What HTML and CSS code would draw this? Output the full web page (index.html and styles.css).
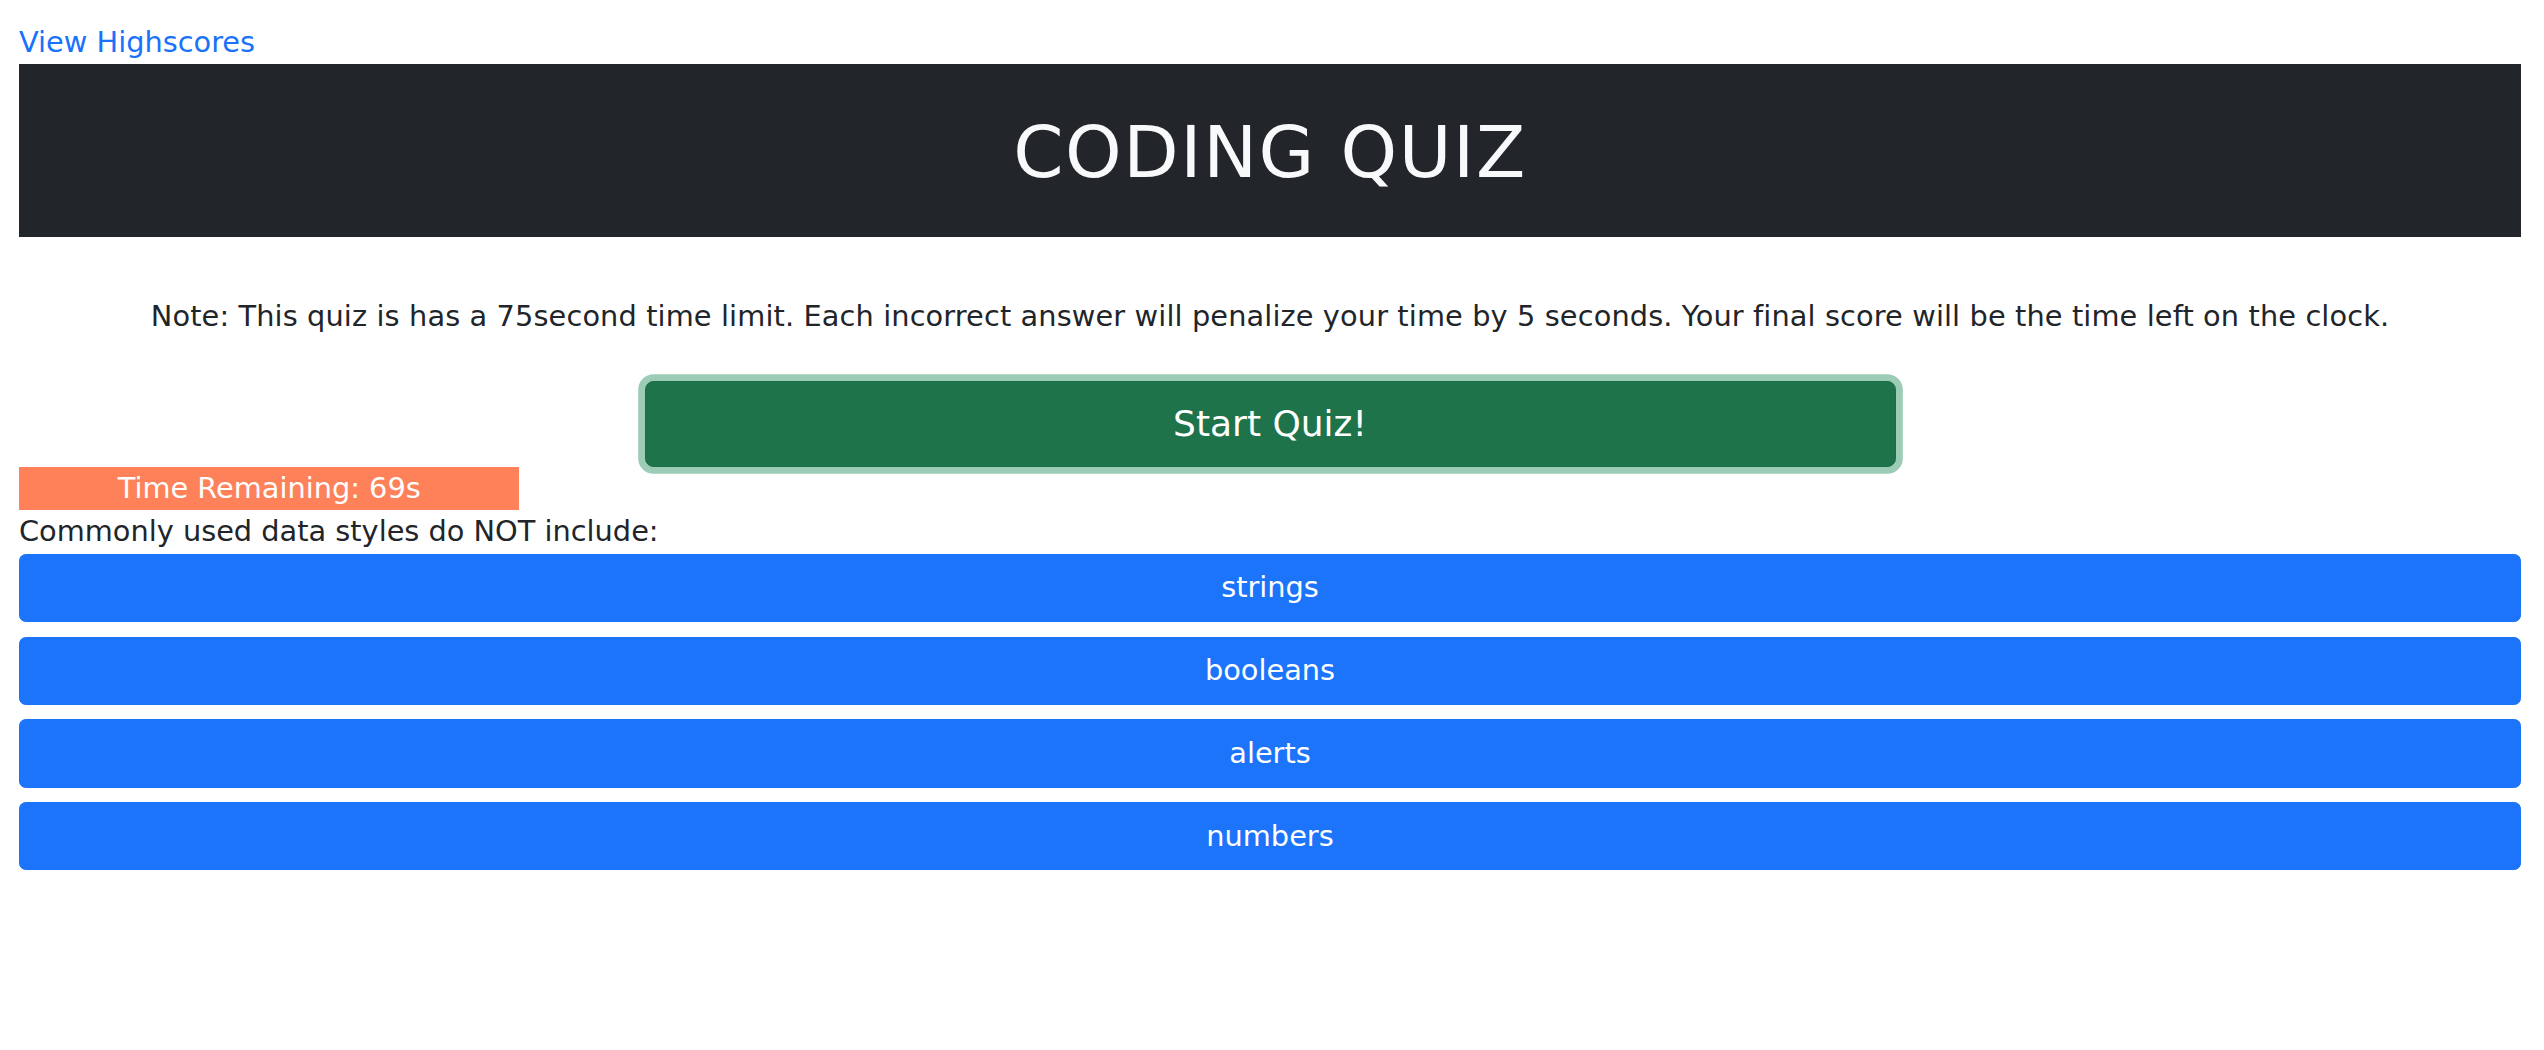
FILE: index.html
```html
<!DOCTYPE html>
<html lang="en">
<head>
<meta charset="utf-8">
<title>Coding Quiz</title>
<link rel="stylesheet" href="styles.css">
</head>
<body>
<div class="page">
  <div class="top-link"><a href="#" class="highscores">View Highscores</a></div>
  <header class="banner"><h1 class="banner-title">CODING QUIZ</h1></header>
  <p class="note">Note: This quiz is has a 75second time limit. Each incorrect answer will penalize your time by 5 seconds. Your final score will be the time left on the clock.</p>
  <div class="start-row"><button class="btn-start">Start Quiz!</button></div>
  <div class="timer">Time Remaining: 69s</div>
  <div class="question">Commonly used data styles do NOT include:</div>
  <div class="answers">
    <button class="btn-answer">strings</button>
    <button class="btn-answer">booleans</button>
    <button class="btn-answer">alerts</button>
    <button class="btn-answer">numbers</button>
  </div>
</div>
</body>
</html>
```
FILE: styles.css
```css
html, body {
  margin: 0;
  padding: 0;
  background: #ffffff;
}
body {
  font-family: "DejaVu Sans", Verdana, sans-serif;
  font-size: 28.8px;
  line-height: 1.5;
  color: #212529;
}
.page {
  padding: 20.8px 23px 0 19px;
}
.top-link {
  height: 43.2px;
}
.highscores {
  color: #1a72fb;
  text-decoration: none;
}
.banner {
  background: #222529;
  height: 172.7px;
  display: flex;
  align-items: center;
  justify-content: center;
}
.banner-title {
  margin: 0;
  padding-top: 4px;
  font-size: 72px;
  font-weight: 400;
  line-height: 1.2;
  letter-spacing: 1.6px;
  color: #f8f9fa;
}
.note {
  margin: 58.4px 0 0;
  text-align: center;
  letter-spacing: 0.12px;
}
.start-row {
  display: flex;
  justify-content: center;
  margin-top: 42.5px;
}
.btn-start {
  width: 50%;
  height: 86.6px;
  font-family: inherit;
  font-size: 36px;
  line-height: 1.5;
  color: #ffffff;
  background: #1e734b;
  border: 1.8px solid #1b6c46;
  border-radius: 8.6px;
  box-shadow: 0 0 0 6.8px rgba(60, 153, 110, 0.5);
  padding: 0;
}
.timer {
  width: 20%;
  height: 43px;
  background: #fe815a;
  color: #ffffff;
  text-align: center;
}
.question {
  height: 43.4px;
}
.answers {
  display: flex;
  flex-direction: column;
  gap: 14.4px;
}
.btn-answer {
  width: 100%;
  height: 68.4px;
  padding: 0;
  font-family: inherit;
  font-size: 28.8px;
  line-height: 1.5;
  color: #ffffff;
  background: #1c74fb;
  border: 1.8px solid #1c74fb;
  border-radius: 6.75px;
}
```
